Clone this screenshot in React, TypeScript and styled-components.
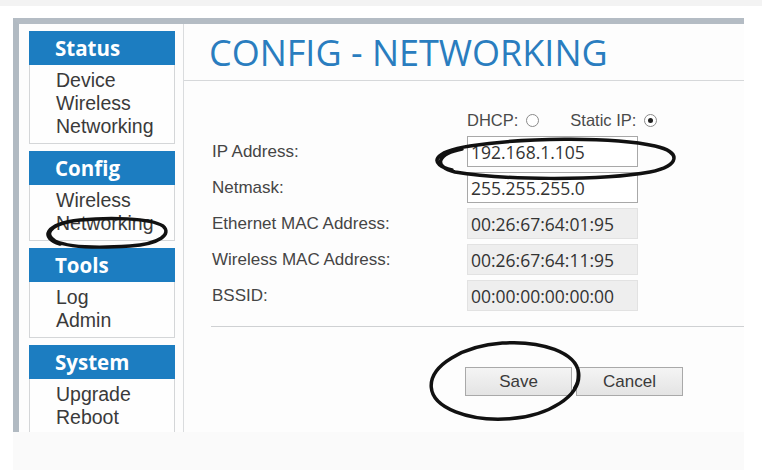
import React from 'react';
import styled, { createGlobalStyle } from 'styled-components';

const GlobalStyle = createGlobalStyle`
  html, body {
    margin: 0;
    padding: 0;
    background: #ffffff;
  }
  * {
    box-sizing: border-box;
  }
`;

const Page = styled.div`
  position: relative;
  width: 762px;
  height: 470px;
  padding: 12px 0 0 13px;
  border-top: 6px solid #f3f3f3;
  background: #ffffff;
  overflow: hidden;
`;

const Frame = styled.div`
  display: flex;
  width: 731px;
  height: 414px;
  border-top: 6px solid #b4bcc4;
  border-left: 6px solid #b1bac2;
  background: #fdfdfd;
  overflow: hidden;
`;

const Bottom = styled.div`
  width: 731px;
  height: 38px;
  background: #fafafa;
`;

const Sidebar = styled.nav`
  display: flex;
  flex-direction: column;
  gap: 7px;
  padding: 7px 0 0 10px;
  width: 156px;
  flex-shrink: 0;
`;

const MenuBox = styled.div`
  border: 1px solid #d4d6d8;
  background: #fefefe;
`;

const MenuHeader = styled.div`
  height: 34px;
  margin: -1px -1px 0;
  padding-left: 26px;
  display: flex;
  align-items: center;
  background: #1c7dc1;
  color: #ffffff;
  font-family: 'Open Sans', 'DejaVu Sans', sans-serif;
  font-weight: 700;
  font-size: 20.5px;
`;

const MenuList = styled.div`
  padding: 4px 0 5px 26px;
  display: flex;
  flex-direction: column;
`;

const MenuItem = styled.span`
  font-family: 'Liberation Sans', Arial, sans-serif;
  font-size: 19.5px;
  line-height: 23px;
  color: #3a3a3a;
`;

const Main = styled.main`
  flex: 1;
  margin-left: 8px;
  border-left: 1px solid #dadcde;
  display: flex;
  flex-direction: column;
`;

const TitleBar = styled.div`
  height: 57px;
  padding-left: 25px;
  display: flex;
  align-items: center;
  border-bottom: 1px solid #d6d8da;
`;

const Title = styled.h1`
  margin: 0;
  font-family: 'Open Sans', 'DejaVu Sans', sans-serif;
  font-weight: 400;
  font-size: 36px;
  letter-spacing: 0;
  color: #2a7dbf;
`;

const Form = styled.div`
  display: grid;
  grid-template-columns: 255px 171px;
  grid-auto-rows: 31px;
  row-gap: 5px;
  margin-top: 19px;
  padding-left: 28px;
`;

const ModeRow = styled.div`
  grid-column: 2;
  display: flex;
  align-items: center;
  white-space: nowrap;
  align-self: end;
  height: 22px;
`;

const ModeOption = styled.label`
  display: flex;
  align-items: center;
  gap: 8px;
  margin-right: 31px;
  font-family: 'Liberation Sans', Arial, sans-serif;
  font-size: 16.5px;
  color: #4a4a4a;
`;

const Radio = styled.span<{ checked?: boolean }>`
  position: relative;
  width: 13px;
  height: 13px;
  border-radius: 50%;
  border: 1px solid #8a8a8a;
  background: #ffffff;

  &::after {
    content: '';
    display: ${({ checked }) => (checked ? 'block' : 'none')};
    position: absolute;
    left: 3px;
    top: 3px;
    width: 5px;
    height: 5px;
    border-radius: 50%;
    background: #222;
  }
`;

const Label = styled.div`
  display: flex;
  align-items: center;
  font-family: 'Liberation Sans', Arial, sans-serif;
  font-size: 17px;
  color: #454545;
`;

const Field = styled.div<{ readOnly?: boolean }>`
  display: flex;
  align-items: center;
  padding-left: 3px;
  border: 1px solid ${({ readOnly }) => (readOnly ? '#e2e2e2' : '#a8a8a8')};
  background: ${({ readOnly }) => (readOnly ? '#eeeeee' : '#ffffff')};
  font-family: 'Open Sans', 'DejaVu Sans', sans-serif;
  font-size: 17.5px;
  color: #333333;
`;

const Divider = styled.div`
  height: 1px;
  margin: 15px 0 0 27px;
  background: #cfd1d3;
`;

const Buttons = styled.div`
  display: flex;
  gap: 4px;
  margin-top: 40px;
  padding-left: 281px;
`;

const Button = styled.button`
  width: 107px;
  height: 29px;
  border: 1px solid #a9a9a9;
  border-radius: 0;
  background: linear-gradient(#f4f4f4, #e4e4e4);
  font-family: 'Liberation Sans', Arial, sans-serif;
  font-size: 17px;
  color: #3a3a3a;
  padding: 0;
`;

const Annotations = styled.svg`
  position: absolute;
  left: 0;
  top: 0;
  pointer-events: none;
`;

const menus = [
  { title: 'Status', items: ['Device', 'Wireless', 'Networking'] },
  { title: 'Config', items: ['Wireless', 'Networking'] },
  { title: 'Tools', items: ['Log', 'Admin'] },
  { title: 'System', items: ['Upgrade', 'Reboot'] },
];

const fields = [
  { label: 'IP Address:', value: '192.168.1.105', readOnly: false },
  { label: 'Netmask:', value: '255.255.255.0', readOnly: false },
  { label: 'Ethernet MAC Address:', value: '00:26:67:64:01:95', readOnly: true },
  { label: 'Wireless MAC Address:', value: '00:26:67:64:11:95', readOnly: true },
  { label: 'BSSID:', value: '00:00:00:00:00:00', readOnly: true },
];

const App: React.FC = () => (
  <>
    <GlobalStyle />
    <Page>
      <Frame>
        <Sidebar>
          {menus.map((menu) => (
            <MenuBox key={menu.title}>
              <MenuHeader>{menu.title}</MenuHeader>
              <MenuList>
                {menu.items.map((item) => (
                  <MenuItem key={item}>{item}</MenuItem>
                ))}
              </MenuList>
            </MenuBox>
          ))}
        </Sidebar>

        <Main>
          <TitleBar>
            <Title>CONFIG - NETWORKING</Title>
          </TitleBar>

          <Form>
            <ModeRow>
              <ModeOption>
                DHCP: <Radio />
              </ModeOption>
              <ModeOption>
                Static IP: <Radio checked />
              </ModeOption>
            </ModeRow>
            {fields.map((f) => (
              <React.Fragment key={f.label}>
                <Label>{f.label}</Label>
                <Field readOnly={f.readOnly}>{f.value}</Field>
              </React.Fragment>
            ))}
          </Form>

          <Divider />

          <Buttons>
            <Button>Save</Button>
            <Button>Cancel</Button>
          </Buttons>
        </Main>
      </Frame>
      <Bottom />

      {/* hand-drawn marks over the screenshot */}
      <Annotations width="762" height="470" viewBox="0 0 762 470">
        <g fill="none" stroke="#111" strokeWidth="3.5" strokeLinecap="round">
          <path d="M 452 164 C 428 158 432 146 470 140 C 520 132 610 130 655 140 C 682 146 680 160 650 166 C 600 175 500 174 455 166 C 432 160 438 148 462 143" />
          <path d="M 60 238 C 40 232 44 218 80 214 C 110 211 150 212 163 220 C 172 228 160 238 130 240 C 100 242 70 242 55 235 C 44 228 50 220 68 216" />
          <path
            transform="rotate(-4 505 375)"
            d="M 579 372 C 580 395 546 413 507 413 C 466 413 431 397 431 376 C 431 354 466 337 505 337 C 545 337 578 352 579 372 C 579 378 577 383 574 387"
          />
        </g>
      </Annotations>
    </Page>
  </>
);

export default App;
